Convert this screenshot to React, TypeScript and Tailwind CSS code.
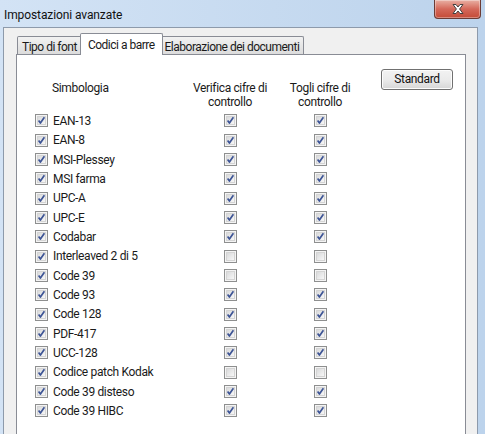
import React from "react";

type Row = { name: string; verify: boolean; strip: boolean };

const rows: Row[] = [
  { name: "EAN-13", verify: true, strip: true },
  { name: "EAN-8", verify: true, strip: true },
  { name: "MSI-Plessey", verify: true, strip: true },
  { name: "MSI farma", verify: true, strip: true },
  { name: "UPC-A", verify: true, strip: true },
  { name: "UPC-E", verify: true, strip: true },
  { name: "Codabar", verify: true, strip: true },
  { name: "Interleaved 2 di 5", verify: false, strip: false },
  { name: "Code 39", verify: false, strip: false },
  { name: "Code 93", verify: true, strip: true },
  { name: "Code 128", verify: true, strip: true },
  { name: "PDF-417", verify: true, strip: true },
  { name: "UCC-128", verify: true, strip: true },
  { name: "Codice patch Kodak", verify: false, strip: false },
  { name: "Code 39 disteso", verify: true, strip: true },
  { name: "Code 39 HIBC", verify: true, strip: true },
];

const CheckBox = ({ checked }: { checked: boolean }) => (
  <div className="w-[13px] h-[13px] border border-[#8e8f8f] bg-[#f4f4f4] p-px shrink-0">
    <div className="w-full h-full border border-[#d4d4d4] bg-gradient-to-br from-[#d9dadb] to-[#f7f7f7] flex items-center justify-center">
      {checked && (
        <svg width="9" height="9" viewBox="0 0 9 9" className="overflow-visible">
          <polyline
            points="1.6,4.6 3.4,7 7.4,1.2"
            fill="none"
            stroke="#3d5495"
            strokeWidth="1.7"
            strokeLinejoin="round"
          />
        </svg>
      )}
    </div>
  </div>
);

const Tab = ({ label, active }: { label: string; active?: boolean }) =>
  active ? (
    <div className="relative z-10 -mx-[2px] h-[22px] -mb-px px-[7px] pt-[2px] bg-white border border-b-0 border-[#898c95] rounded-t-[2px]">
      {label}
    </div>
  ) : (
    <div className="h-[18px] px-[4px] pt-[1px] bg-gradient-to-b from-[#f2f2f2] to-[#dcdcdc] border border-b-0 border-[#898c95] rounded-t-[2px] -ml-px first:ml-0">
      {label}
    </div>
  );

export default function App() {
  return (
    <div className="w-[485px] h-[434px] overflow-hidden bg-gradient-to-r from-[#d3e3f5] to-[#bcd3ec] font-['Segoe_UI',Roboto,sans-serif] text-[12px] tracking-[-0.35px] text-[#1a1a1a]">
      <div className="relative h-[27px] flex items-center pl-[4px] pt-[2px]">
        <span className="text-[12px] tracking-[-0.1px] text-[#111]">Impostazioni avanzate</span>
        <div className="absolute right-[4px] top-0 w-[47px] h-[19px] rounded-b-[4px] border border-t-0 border-[#6b3b35] bg-gradient-to-b from-[#e8b0a4] via-[#d4685a] to-[#c44a36] flex items-center justify-center shadow-[inset_0_0_0_1px_rgba(255,255,255,0.35)]">
          <svg width="14" height="12" viewBox="0 0 14 12">
            <path
              d="M2 1.5 L5 1.5 L7 4 L9 1.5 L12 1.5 L8.6 6 L12 10.5 L9 10.5 L7 8 L5 10.5 L2 10.5 L5.4 6 Z"
              fill="#ffffff"
              stroke="#44403f"
              strokeWidth="1"
              strokeLinejoin="round"
            />
          </svg>
        </div>
      </div>

      <div className="ml-[3px] mr-[7px] h-[420px] border border-[#8d9aab] bg-[#f0f0f0] pt-[5px] pl-[12px]">
        <div className="flex items-end h-[21px] pl-[1px] tracking-[-0.5px]">
          <Tab label="Tipo di font" />
          <Tab label="Codici a barre" active />
          <Tab label="Elaborazione dei documenti" />
        </div>

        <div className="w-[450px] h-[400px] bg-white border border-[#898c95] flex">
          <div className="pl-[18px] pt-[26px]">
            <div className="grid grid-cols-[150px_90px_90px] leading-[14px] h-[30.33px]">
              <div className="pl-[17px]">Simbologia</div>
              <div className="text-center whitespace-nowrap">
                Verifica cifre di
                <br />
                controllo
              </div>
              <div className="text-center whitespace-nowrap">
                Togli cifre di
                <br />
                controllo
              </div>
            </div>
            {rows.map((r) => (
              <div
                key={r.name}
                className="grid grid-cols-[150px_90px_90px] h-[19.33px] items-center"
              >
                <div className="flex items-center gap-[5px]">
                  <CheckBox checked />
                  <span className="leading-none whitespace-nowrap">{r.name}</span>
                </div>
                <div className="flex justify-center">
                  <CheckBox checked={r.verify} />
                </div>
                <div className="flex justify-center">
                  <CheckBox checked={r.strip} />
                </div>
              </div>
            ))}
          </div>
          <div className="ml-[16px] pt-[14px]">
            <button className="w-[72px] h-[21px] rounded-[3px] border border-[#707070] bg-gradient-to-b from-[#f2f2f2] via-[#ebebeb] to-[#d6d6d6] shadow-[inset_0_0_0_1px_#fcfcfc] text-[12px] text-[#111] leading-none pb-[2px]">
              Standard
            </button>
          </div>
        </div>
      </div>
    </div>
  );
}
